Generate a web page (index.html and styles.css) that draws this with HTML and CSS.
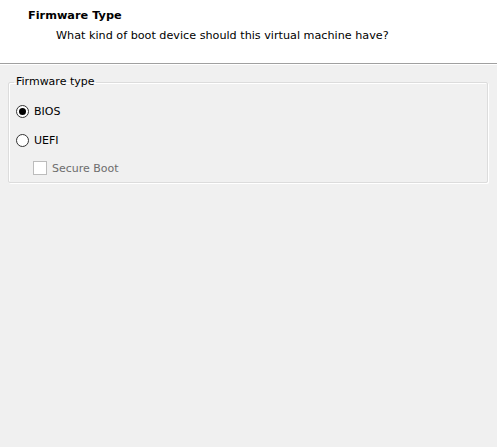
FILE: index.html
```html
<!DOCTYPE html>
<html>
<head>
<meta charset="utf-8">
<link rel="stylesheet" href="styles.css">
</head>
<body>
<div class="header">
  <div class="title">Firmware Type</div>
  <div class="subtitle">What kind of boot device should this virtual machine have?</div>
</div>
<div class="content">
  <fieldset class="group">
    <legend>Firmware type</legend>
    <label class="opt first">
      <span class="radio checked"></span>
      <span>BIOS</span>
    </label>
    <label class="opt">
      <span class="radio"></span>
      <span>UEFI</span>
    </label>
    <label class="opt sub disabled">
      <span class="check"></span>
      <span>Secure Boot</span>
    </label>
  </fieldset>
</div>
</body>
</html>
```
FILE: styles.css
```css
html, body {
  margin: 0;
  padding: 0;
  height: 100%;
}
body {
  background: #f0f0f0;
  font-family: "DejaVu Sans", "Liberation Sans", sans-serif;
  font-size: 11px;
  color: #000;
}
.header {
  background: #fff;
  height: 64px;
  box-sizing: border-box;
  padding: 9px 0 0 28px;
  border-bottom: 1px solid #a0a0a0;
}
.title {
  font-weight: bold;
  line-height: 14px;
  font-size: 11.3px;
}
.subtitle {
  margin-top: 6px;
  padding-left: 28px;
  line-height: 14px;
  font-size: 11.2px;
}
.content {
  border-top: 1px solid #fff;
  padding: 10px 9px 0 8px;
}
.group {
  margin: 0;
  border: 1px solid #dcdcdc;
  box-shadow: inset 1px 1px 0 #fff, 1px 1px 0 #fff;
  border-radius: 2px;
  padding: 8px 8px 4px 7px;
  height: 108px;
  box-sizing: border-box;
}
legend {
  padding: 0 2px;
  margin-left: -2px;
  line-height: 14px;
}
.opt {
  display: flex;
  align-items: center;
  gap: 5px;
  height: 28px;
}
.opt.first {
  height: 29px;
}
.radio {
  width: 11px;
  height: 11px;
  border: 1px solid #333;
  border-radius: 50%;
  background: #fff;
  position: relative;
}
.radio.checked::after {
  content: "";
  position: absolute;
  left: 2px;
  top: 2px;
  width: 7px;
  height: 7px;
  border-radius: 50%;
  background: #000;
}
.sub {
  padding-left: 17px;
  gap: 5px;
}
.check {
  width: 12px;
  height: 12px;
  border: 1px solid #bcbcbc;
  background: #fff;
}
.disabled {
  color: #6d6d6d;
}
```
